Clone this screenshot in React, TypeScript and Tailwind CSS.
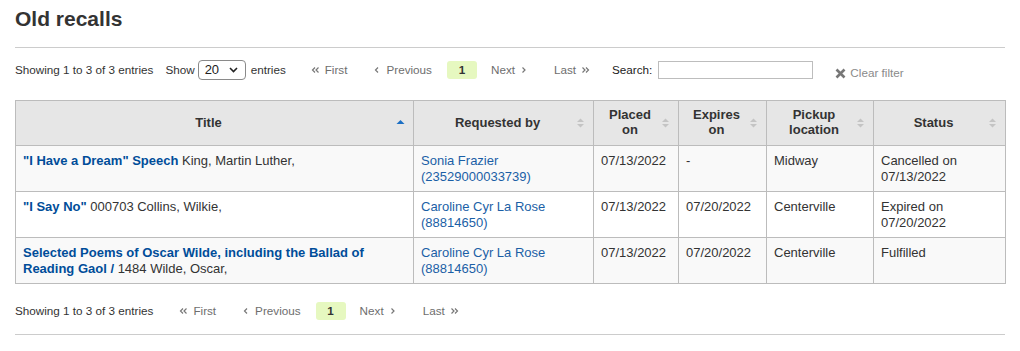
import React from "react"

type Row = {
  title: string
  rest: string
  patron: string
  card: string
  placed: string
  expires: string
  pickup: string
  status: string[]
  bg: string
}

const rows: Row[] = [
  {
    title: "\"I Have a Dream\" Speech",
    rest: " King, Martin Luther,",
    patron: "Sonia Frazier",
    card: "(23529000033739)",
    placed: "07/13/2022",
    expires: "-",
    pickup: "Midway",
    status: ["Cancelled on", "07/13/2022"],
    bg: "bg-[#f9f9f9]",
  },
  {
    title: "\"I Say No\"",
    rest: " 000703 Collins, Wilkie,",
    patron: "Caroline Cyr La Rose",
    card: "(88814650)",
    placed: "07/13/2022",
    expires: "07/20/2022",
    pickup: "Centerville",
    status: ["Expired on", "07/20/2022"],
    bg: "bg-white",
  },
  {
    title: "Selected Poems of Oscar Wilde, including the Ballad of Reading Gaol /",
    rest: " 1484 Wilde, Oscar,",
    patron: "Caroline Cyr La Rose",
    card: "(88814650)",
    placed: "07/13/2022",
    expires: "07/20/2022",
    pickup: "Centerville",
    status: ["Fulfilled"],
    bg: "bg-[#f9f9f9]",
  },
]

function SortIcon({ active }: { active?: boolean }) {
  if (active) {
    return (
      <svg width="9" height="10" viewBox="0 0 9 10" className="absolute right-[8px] top-1/2 -translate-y-1/2">
        <path d="M0.5 6 L4.5 2 L8.5 6 Z" fill="#1c6fc4" />
      </svg>
    )
  }
  return (
    <svg width="9" height="10" viewBox="0 0 9 10" className="absolute right-[8px] top-1/2 -translate-y-1/2">
      <path d="M1 4 L4.5 0.5 L8 4 Z" fill="#c4c4c4" />
      <path d="M1 6 L4.5 9.5 L8 6 Z" fill="#c4c4c4" />
    </svg>
  )
}

function Chev({ dir, double }: { dir: "l" | "r"; double?: boolean }) {
  const d = dir === "l" ? "M4 1.5 L1.5 4 L4 6.5" : "M1.5 1.5 L4 4 L1.5 6.5"
  const d2 = dir === "l" ? "M7.5 1.5 L5 4 L7.5 6.5" : "M5 1.5 L7.5 4 L5 6.5"
  return (
    <svg width={double ? 9 : 6} height="8" viewBox={double ? "0 0 9 8" : "0 0 6 8"} className="inline-block">
      <path d={d} stroke="#777" strokeWidth="1.2" fill="none" />
      {double && <path d={d2} stroke="#777" strokeWidth="1.2" fill="none" />}
    </svg>
  )
}

function Pager() {
  return (
    <div className="flex items-center text-[#6e6e6e]">
      <span className="flex items-center gap-[5px] px-[12px]">
        <Chev dir="l" double />
        First
      </span>
      <span className="ml-[3px] flex items-center gap-[6px] px-[12px]">
        <Chev dir="l" />
        Previous
      </span>
      <span className="ml-[3px] flex h-[18px] w-[30px] items-center justify-center rounded-[3px] bg-[#e6f8c0] font-bold text-[#333]">
        1
      </span>
      <span className="ml-[2px] flex items-center gap-[6px] px-[12px]">
        Next
        <Chev dir="r" />
      </span>
      <span className="ml-[3px] flex items-center gap-[5px] px-[12px]">
        Last
        <Chev dir="r" double />
      </span>
    </div>
  )
}

const headers = [
  { label: ["Title"], w: "w-[398px]", active: true },
  { label: ["Requested by"], w: "w-[180px]" },
  { label: ["Placed", "on"], w: "w-[85px]" },
  { label: ["Expires", "on"], w: "w-[88px]" },
  { label: ["Pickup", "location"], w: "w-[107px]" },
  { label: ["Status"], w: "w-[132px]" },
]

export default function App() {
  return (
    <div className="min-h-[351px] bg-white px-[15px] pt-[7px] font-['Liberation_Sans',Arial,sans-serif] text-[#333]">
      <h1 className="text-[21px] font-bold leading-[24px] text-[#333]">Old recalls</h1>
      <div className="mt-[16px] h-px w-[990px] bg-[#cccccc]" />

      <div className="mt-[12px] flex h-[20px] items-center text-[11.7px]">
        <span>Showing 1 to 3 of 3 entries</span>
        <span className="ml-[12px]">Show</span>
        <div className="ml-[3px] flex h-[20px] w-[48px] items-center justify-between rounded-[4px] border border-[#8a8a8a] pl-[6px] pr-[7px] text-[13px] text-[#222]">
          <span>20</span>
          <svg width="9" height="6" viewBox="0 0 9 6">
            <path d="M1 1 L4.5 4.5 L8 1" stroke="#222" strokeWidth="1.6" fill="none" />
          </svg>
        </div>
        <span className="ml-[5px]">entries</span>
        <div className="ml-[13px]">
          <Pager />
        </div>
        <span className="ml-[10px] text-[#222]">Search:</span>
        <div className="ml-[6px] h-[18px] w-[155px] border border-[#bdbdbd] bg-white" />
        <span className="ml-[22px] mt-[6px] flex items-center gap-[4px] text-[#8a8a8a]">
          <svg width="11" height="11" viewBox="0 0 11 11">
            <path d="M1.5 1.5 L9.5 9.5 M9.5 1.5 L1.5 9.5" stroke="#777" strokeWidth="2.6" />
          </svg>
          Clear filter
        </span>
      </div>

      <table className="mt-[20px] w-[990px] table-fixed border-collapse border border-[#bcbcbc] text-[13px]">
        <thead>
          <tr className="bg-[#e6e6e6]">
            {headers.map((h, i) => (
              <th
                key={i}
                className={`${h.w} relative border border-[#bcbcbc] pb-[8px] pl-[8px] pr-[20px] pt-[6px] text-center align-middle font-bold leading-[15px] text-[#333]`}
              >
                {h.label.map((l, j) => (
                  <div key={j}>{l}</div>
                ))}
                <SortIcon active={h.active} />
              </th>
            ))}
          </tr>
        </thead>
        <tbody>
          {rows.map((r, i) => (
            <tr key={i} className={`${r.bg} h-[46px] align-top leading-[16px]`}>
              <td className="border border-[#bcbcbc] px-[7px] pb-[6px] pt-[7px]">
                <span className="font-bold text-[#004d99]">{r.title}</span>
                {r.rest}
              </td>
              <td className="border border-[#bcbcbc] px-[7px] pb-[6px] pt-[7px] text-[#1b5fa6]">
                <div>{r.patron}</div>
                <div>{r.card}</div>
              </td>
              <td className="border border-[#bcbcbc] px-[7px] pb-[6px] pt-[7px]">{r.placed}</td>
              <td className="border border-[#bcbcbc] px-[7px] pb-[6px] pt-[7px]">{r.expires}</td>
              <td className="border border-[#bcbcbc] px-[7px] pb-[6px] pt-[7px]">{r.pickup}</td>
              <td className="border border-[#bcbcbc] px-[7px] pb-[6px] pt-[7px]">
                {r.status.map((s, j) => (
                  <div key={j}>{s}</div>
                ))}
              </td>
            </tr>
          ))}
        </tbody>
      </table>

      <div className="mt-[17px] flex h-[20px] items-center text-[11.7px]">
        <span>Showing 1 to 3 of 3 entries</span>
        <div className="ml-[14px]">
          <Pager />
        </div>
      </div>
      <div className="mt-[13px] h-px w-[990px] bg-[#cccccc]" />
    </div>
  )
}
